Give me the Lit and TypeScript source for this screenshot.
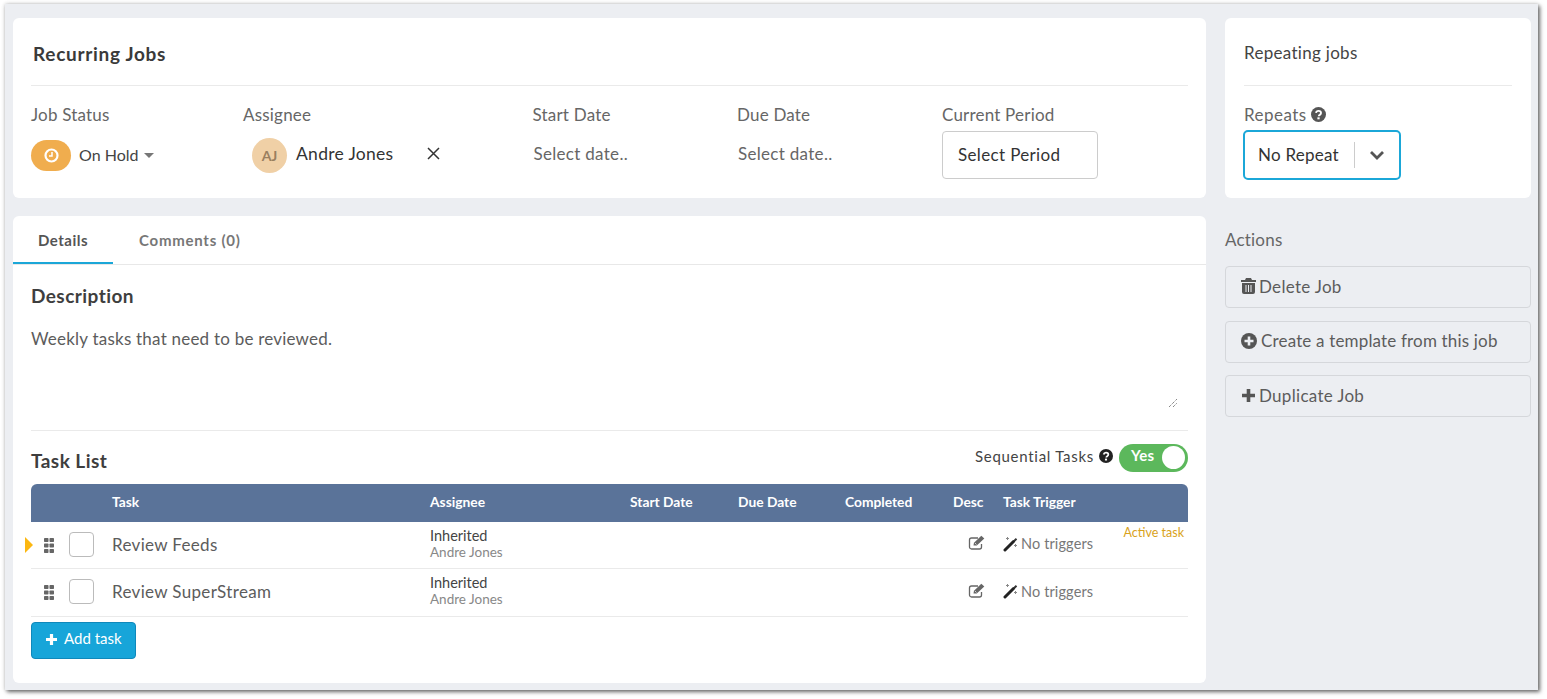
import { LitElement, html, css, svg } from "lit";
import { customElement } from "lit/decorators.js";

const help = (size: number, color: string) => html`<svg width=${size} height=${size} viewBox="0 0 24 24" style="flex:none"><circle cx="12" cy="12" r="12" fill=${color}/><path d="M8 9.4a4 4 0 0 1 4-3.2c2.3 0 4 1.5 4 3.4 0 1.600-1 2.300-2 3-.9.6-1.500 1-1.500 2.100" fill="none" stroke="#fff" stroke-width="3"/><rect x="10.200" y="16.500" width="3.600" height="3.200" fill="#fff"/></svg>`;
const editIcon = html`<svg width="18" height="15" viewBox="0 0 17 15"><path d="M13 9V12a2 2 0 0 1-2 2H3A2 2 0 0 1 1 12V5A2 2 0 0 1 3 3H9.500" fill="none" stroke="#666" stroke-width="1.300"/><path d="M5 10.500 5.500 7.800 12.800 .8 15.800 3.600 8.300 10.600Z" fill="#666"/><path d="M6.500 8 8 9.500" stroke="#fff" stroke-width=".7"/></svg>`;
const wandIcon = html`<svg width="15" height="16" viewBox="0 0 15 16"><path d="M2 14 10.500 5.500" stroke="#222" stroke-width="3" stroke-linecap="round"/><path d="M10.500 4.200 12.800 2 14.200 3.400 11.900 5.700Z" fill="#333"/><path d="M3 2.500h3M4.500 1v3M12.500 8v3M11 9.500h3" stroke="#888" stroke-width="1"/></svg>`;
const grip = html`<svg class="grip" width="10" height="15" viewBox="0 0 10 15" fill="#666">${[0, 5.5, 11].map(y => svg`<rect x="0" y=${y} width="4.500" height="4" rx=".7"/><rect x="5.500" y=${y} width="4.500" height="4" rx=".7"/>`)}</svg>`;

const rows = [
  { name: "Review Feeds", active: true },
  { name: "Review SuperStream", active: false },
];
const heads = ["", "Task", "Assignee", "Start Date", "Due Date", "Completed", "Desc", "Task Trigger"];

@customElement("app-root")
export class AppRoot extends LitElement {
  static styles = css`
    :host { display: block; width: 1547px; height: 699px; background: #fff; overflow: hidden;
      font-family: "Lato", "Liberation Sans", sans-serif; color: #555; font-size: 17px; }
    * { box-sizing: border-box; }
    .frame { margin: 4px 0 0 5px; width: 1533px; height: 686px; background: #eceef2;
      box-shadow: 2px 2px 4px rgba(0,0,0,.55), 0 0 4px rgba(0,0,0,.2);
      padding: 14px 7px 0 8px; display: grid; grid-template-columns: 1193px 306px; column-gap: 19px;
      grid-template-rows: 180px 467px; row-gap: 18px; }
    .card { background: #fff; border-radius: 6px; }
    .top { padding: 0 18px; }
    .top-head { height: 68px; border-bottom: 1px solid #eaeaea; display: flex; align-items: center;
      padding: 4px 0 0 2px; font-size: 19px; font-weight: 700; color: #3a3a3a; letter-spacing: .7px; }
    .fields { display: grid; grid-template-columns: 212px 289.500px 204.500px 205px 1fr; padding-top: 18px; }
    .lbl { font-size: 17px; color: #666; line-height: 21px; height: 21px; white-space: nowrap; letter-spacing: .2px; }
    .val { height: 48px; margin-top: 6px; display: flex; align-items: center; }
    .pill { width: 40px; height: 31px; border-radius: 16px; background: #f0ad4e; display: flex;
      align-items: center; justify-content: center; margin-right: 8px; }
    .status { font-size: 16px; color: #444; padding-bottom: 2px; }
    .caret { width: 0; height: 0; border: 5px solid transparent; border-top: 5px solid #777; border-bottom: 0; margin-left: 6px; }
    .avatar { width: 35px; height: 35px; border-radius: 50%; background: #f0d0a6; color: #9a7f5f;
      font-size: 14px; font-weight: 700; display: flex; align-items: center; justify-content: center;
      margin: 0 9px 0 9px; }
    .person { color: #333; font-size: 17.500px; width: 131px; white-space: nowrap; margin-top: -4px; letter-spacing: .3px; }
    .close { margin-top: -3px; }
    .placeholder { color: #666; font-size: 17px; white-space: nowrap; padding: 0 0 4px 1px; letter-spacing: .3px; }
    .period { width: 156px; height: 48px; border: 1px solid #ccc; border-radius: 4px; display: flex;
      align-items: center; padding: 0 0 2px 15px; color: #333; letter-spacing: .35px; }

    .side { padding: 0 19px; }
    .side .top-head { font-size: 17px; font-weight: 400; color: #444; padding: 2px 0 0; letter-spacing: .3px; }
    .repeats-lbl { margin-top: 18px; display: flex; align-items: center; gap: 4px; letter-spacing: .45px; }
    .select { width: 158px; height: 50px; margin-top: 5px; margin-left: -1px; border: 2px solid #1ba7d8; border-radius: 5px;
      display: flex; align-items: center; padding-left: 13px; color: #333; }
    .select .txt { width: 82px; white-space: nowrap; letter-spacing: .25px; padding-bottom: 2px; }
    .select .sep { width: 1px; height: 26px; background: #ccc; margin: 0 14px 0 14px; }

    .main { display: flex; flex-direction: column; }
    .tabs { height: 49px; flex: none; display: flex; border-bottom: 1px solid #e8e8e8; font-size: 15px; font-weight: 700; letter-spacing: .75px; }
    .tab { height: 48px; display: flex; align-items: center; color: #777; padding: 0 26px; white-space: nowrap; }
    .tab.on { width: 100px; padding: 2px 0 0 25px; color: #555; border-bottom: 2px solid #1ba7d8; letter-spacing: .5px; }
    .body { padding: 0 18px; flex: 1; }
    .h2 { font-size: 19px; font-weight: 700; color: #3e3e3e; letter-spacing: .45px; }
    .desc-h { height: 21px; margin-top: 20px; line-height: 21px; }
    .desc { margin-top: 23px; height: 102px; border-bottom: 1px solid #eaeaea; position: relative; line-height: 20px; color: #5c5c5c; letter-spacing: .22px; }
    .grab { position: absolute; right: 10px; bottom: 22px; display: block; }
    .list-head { height: 53px; display: flex; align-items: center; justify-content: space-between; }
    .list-head .h2 { margin-top: 5px; }
    .seq { display: flex; align-items: center; font-size: 15px; color: #444; gap: 5px; letter-spacing: .72px; }
    .seq-t { padding-bottom: 4px; }
    .seq svg { margin-bottom: 3px; }
    .toggle { width: 69px; height: 28px; border-radius: 14px; background: #5cb85c; margin-left: 1px; display: flex;
      align-items: center; justify-content: space-between; padding: 0 3px 0 12px; color: #fff; font-weight: 700; font-size: 15px; letter-spacing: .2px; }
    .yes { padding-bottom: 5px; }
    .knob { width: 23px; height: 23px; border-radius: 50%; background: #fff; }
    .grid { display: grid; grid-template-columns: 81px 318px 200px 108px 107px 108px 50px 185px; }
    .thead { height: 38px; background: #5a7399; border-radius: 6px 6px 0 0; color: #fff; font-size: 13.800px; font-weight: 700; align-items: center; padding-bottom: 4px; white-space: nowrap; }
    .tr { height: 48px; border-bottom: 1px solid #eaeaea; align-items: center; position: relative; }
    .tr.first { height: 47px; }
    .ctl { display: flex; align-items: center; padding: 0 0 2px 13px; gap: 15px; }
    .grip { flex: none; margin-top: 2px; }
    .check { width: 25px; height: 25px; border: 1px solid #bbb; border-radius: 4px; background: #fff; }
    .name { padding: 0 0 2px 0; font-size: 17px; color: #5c5c5c; white-space: nowrap; letter-spacing: .33px; }
    .who { font-size: 14.500px; line-height: 17px; color: #444; padding-bottom: 3px; }
    .who small { display: block; font-size: 13.500px; color: #888; line-height: 17px; }
    .edit { grid-column: 7; justify-self: start; padding: 0 0 5px 15px; display: flex; }
    .trig { display: flex; align-items: center; gap: 3px; font-size: 14.500px; color: #777; white-space: nowrap; letter-spacing: .12px; padding-bottom: 3px; }
    .flag { position: absolute; left: -6px; top: 15px; width: 0; height: 0; border: 8px solid transparent;
      border-left: 8px solid #fcb711; border-right: 0; }
    .tag { position: absolute; right: 4px; top: 3px; font-size: 12.500px; color: #d9a21b; }
    .add { margin-top: 5px; width: 105px; height: 37px; background: #17a5d9; border: 1px solid #0f88bb; border-radius: 4px;
      color: #fff; font-size: 15px; display: flex; align-items: center; padding: 0 0 5px 13px; gap: 6px; }
    .add svg { margin-top: 3px; }

    .actions { padding-top: 13px; }
    .actions .lbl { height: 22px; }
    .btn { height: 42px; border: 1px solid #d5d7db; border-radius: 4px; display: flex; align-items: center;
      padding: 0 0 2px 15px; gap: 3px; font-size: 17px; color: #5c5c5c; white-space: nowrap; letter-spacing: .3px; }
    .btn.wide { gap: 4px; letter-spacing: .17px; }
    .btn.first { margin-top: 15px; }
    .btn + .btn { margin-top: 12.500px; }
  `;

  render() {
    return html`<div class="frame">
      <section class="card top">
        <div class="top-head">Recurring Jobs</div>
        <div class="fields">
          <div><div class="lbl">Job Status</div><div class="val">
            <span class="pill"><svg width="15" height="15" viewBox="0 0 15 15"><circle cx="7.500" cy="7.500" r="6" fill="none" stroke="#fff" stroke-width="2.200"/><path d="M8 4v4H5" fill="none" stroke="#fff" stroke-width="1.500"/></svg></span>
            <span class="status">On Hold</span><span class="caret"></span></div></div>
          <div><div class="lbl">Assignee</div><div class="val">
            <span class="avatar">AJ</span><span class="person">Andre Jones</span>
            <svg class="close" width="13" height="13" viewBox="0 0 13 13"><path d="M1 1l11 11M12 1 1 12" stroke="#333" stroke-width="1.500"/></svg></div></div>
          <div><div class="lbl">Start Date</div><div class="val"><span class="placeholder">Select date..</span></div></div>
          <div><div class="lbl">Due Date</div><div class="val"><span class="placeholder">Select date..</span></div></div>
          <div><div class="lbl">Current Period</div><div class="val"><div class="period">Select Period</div></div></div>
        </div>
      </section>
      <section class="card side">
        <div class="top-head">Repeating jobs</div>
        <div class="lbl repeats-lbl">Repeats ${help(15, "#555")}</div>
        <div class="select"><span class="txt">No Repeat</span><span class="sep"></span>
          <svg width="16" height="10" viewBox="0 0 16 10"><path d="M2 2l6 6 6-6" fill="none" stroke="#555" stroke-width="2.800"/></svg></div>
      </section>
      <section class="card main">
        <div class="tabs"><div class="tab on">Details</div><div class="tab">Comments (0)</div></div>
        <div class="body">
          <div class="h2 desc-h">Description</div>
          <div class="desc">Weekly tasks that need to be reviewed.
            <svg class="grab" width="10" height="10" viewBox="0 0 10 10"><path d="M1 9 9 1M5 9 9 5" stroke="#555" stroke-width="1" stroke-dasharray="1 1"/></svg></div>
          <div class="list-head"><div class="h2">Task List</div>
            <div class="seq"><span class="seq-t">Sequential Tasks</span>${help(14, "#222")}<div class="toggle"><span class="yes">Yes</span><span class="knob"></span></div></div></div>
          <div class="grid thead">${heads.map(h => html`<div>${h}</div>`)}</div>
          ${rows.map(r => html`<div class="grid tr ${r.active ? "first" : ""}">
            ${r.active ? html`<span class="flag"></span><span class="tag">Active task</span>` : ""}
            <div class="ctl">${grip}<span class="check"></span></div>
            <div class="name">${r.name}</div>
            <div class="who">Inherited<small>Andre Jones</small></div>
            <div class="edit">${editIcon}</div>
            <div class="trig">${wandIcon}No triggers</div>
          </div>`)}
          <div class="add"><svg width="13" height="13" viewBox="0 0 13 13"><path d="M6.500 1v11M1 6.500h11" stroke="#fff" stroke-width="3.200"/></svg>Add task</div>
        </div>
      </section>
      <aside class="actions">
        <div class="lbl">Actions</div>
        <div class="btn first"><svg width="15" height="16" viewBox="0 0 15 16" fill="#555"><path d="M5 0h5l1 2h4v2H0V2h4ZM1 5h13v9a2 2 0 0 1-2 2H3a2 2 0 0 1-2-2Z"/><path d="M5 7v7M7.500 7v7M10 7v7" stroke="#eceef2" stroke-width="1"/></svg>Delete Job</div>
        <div class="btn wide"><svg width="16" height="16" viewBox="0 0 16 16"><circle cx="8" cy="8" r="8" fill="#555"/><path d="M8 3.500v9M3.500 8h9" stroke="#eceef2" stroke-width="2.600"/></svg>Create a template from this job</div>
        <div class="btn"><svg width="15" height="15" viewBox="0 0 15 15"><path d="M7.500 1v13M1 7.500h13" stroke="#555" stroke-width="3.600"/></svg>Duplicate Job</div>
      </aside>
    </div>`;
  }
}
